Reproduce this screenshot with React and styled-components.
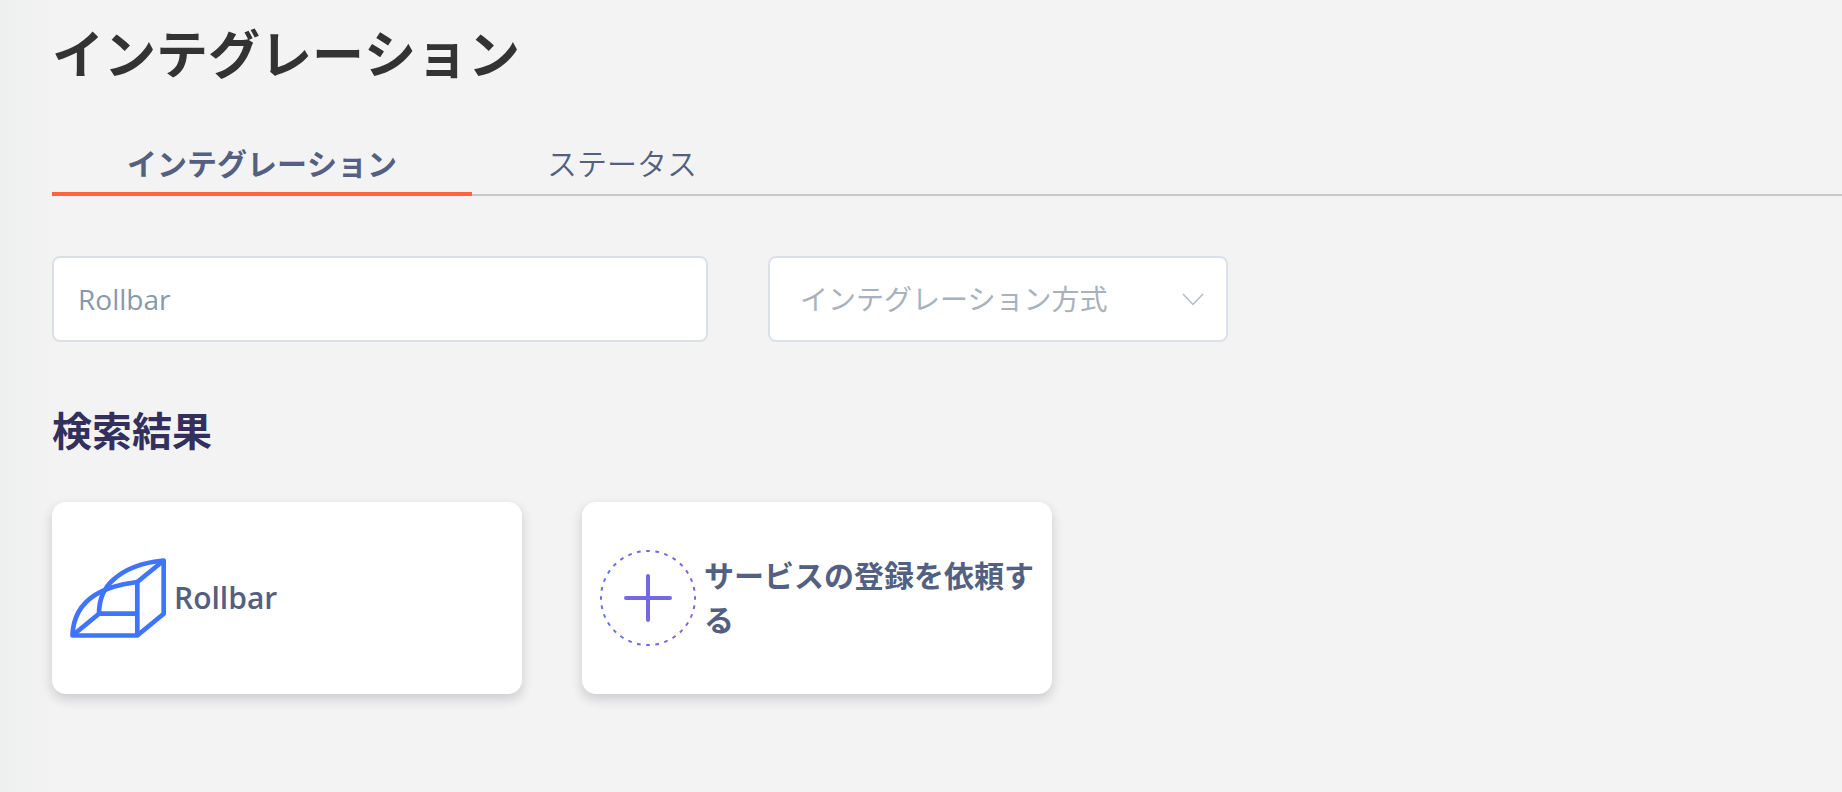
import React, { useState } from 'react';
import styled, { createGlobalStyle } from 'styled-components';

const GlobalStyle = createGlobalStyle`
  * {
    box-sizing: border-box;
  }

  body {
    margin: 0;
    background: #f3f3f3;
    font-family: 'Open Sans', 'Noto Sans CJK JP', sans-serif;
    font-kerning: none;
  }
`;

const Page = styled.main`
  min-height: 100vh;
  padding: 16px 0 60px 52px;
  background: linear-gradient(to right, #eeefef, #f3f3f3 56px);
`;

const Title = styled.h1`
  margin: 0;
  color: #333;
  font-size: 52px;
  font-weight: 700;
  line-height: 76px;
`;

const Tabs = styled.nav`
  display: flex;
  margin-top: 48px;
  box-shadow: inset 0 -2px #c9c9c9;
`;

const Tab = styled.button`
  height: 56px;
  padding: 0 75px 4px;
  border: 0;
  border-bottom: 4px solid ${props => (props.$active ? '#ff643d' : 'transparent')};
  background: none;
  color: #536081;
  font-family: inherit;
  font-kerning: inherit;
  font-size: 30px;
  font-weight: ${props => (props.$active ? 700 : 350)};
  line-height: 44px;
  white-space: nowrap;
  cursor: pointer;
`;

const Filters = styled.form`
  display: flex;
  flex-wrap: wrap;
  gap: 60px;
  margin-top: 60px;
  padding-right: 52px;
`;

const SearchInput = styled.input`
  width: 656px;
  max-width: 100%;
  height: 86px;
  padding: 0 24px;
  border: 2px solid #dce0e6;
  border-radius: 8px;
  outline: none;
  background: #fff;
  color: #8798ad;
  font-family: inherit;
  font-size: 28px;
  font-weight: 500;
`;

const SelectBox = styled.div`
  position: relative;
  width: 460px;
  max-width: 100%;
`;

const Select = styled.select`
  width: 100%;
  height: 86px;
  padding: 0 72px 0 30px;
  border: 2px solid #dce0e9;
  border-radius: 8px;
  outline: none;
  appearance: none;
  background: #fff;
  color: #a8b1bc;
  font-family: inherit;
  font-size: 28px;
  font-weight: 400;
`;

const Chevron = styled.svg`
  position: absolute;
  top: 36px;
  right: 24px;
  width: 22px;
  height: 14px;
  pointer-events: none;
`;

const SectionTitle = styled.h2`
  margin: 60px 0 42px;
  color: #33305e;
  font-size: 40px;
  font-weight: 700;
  line-height: 58px;
`;

const Cards = styled.div`
  display: flex;
  flex-wrap: wrap;
  gap: 60px;
  padding-right: 52px;
`;

const Card = styled.a`
  display: flex;
  align-items: center;
  gap: 8px;
  width: 470px;
  max-width: 100%;
  min-height: 192px;
  padding: 18px;
  border-radius: 14px;
  background: #fff;
  box-shadow: 0 5px 12px rgba(40, 41, 61, 0.2);
  color: #536081;
  font-size: 30px;
  font-weight: 600;
  line-height: 44px;
  text-decoration: none;
`;

const CardIcon = styled.svg`
  flex: none;
  width: 96px;
  height: 96px;
  fill: none;
`;

const RollbarLogo = () => (
  <CardIcon
    viewBox='0 0 96 96'
    stroke='#3e74ff'
    strokeWidth='4.7'
    strokeLinejoin='round'
    aria-hidden='true'
  >
    <path d='M2.5 85.5H67.3V32C51 34 37 37.5 25 45C11 54 3 67 2.5 85.5Z' />
    <path d='M2.5 85.5L29 63.7H67.3' />
    <path d='M29 63.7C29 50 33 39 43 30C55 19 73 12.5 93.7 10.5V63.7L67.3 85.5' />
    <path d='M67.3 32L93.7 10.5' />
  </CardIcon>
);

const PlusIcon = () => (
  <CardIcon viewBox='0 0 96 96' stroke='url(#plus)' aria-hidden='true'>
    <defs>
      <linearGradient id='plus' gradientUnits='userSpaceOnUse' x1='0' y1='48' x2='96' y2='48'>
        <stop offset='0' stopColor='#5f74e6' />
        <stop offset='1' stopColor='#865fe2' />
      </linearGradient>
    </defs>
    <circle
      cx='48'
      cy='48'
      r='47'
      strokeWidth='2'
      pathLength='320'
      strokeDasharray='4 6'
      strokeDashoffset='2'
    />
    <path d='M26 48H70M48 26V70' stroke='#7469e4' strokeWidth='4' strokeLinecap='round' />
  </CardIcon>
);

const tabs = ['インテグレーション', 'ステータス'];

const services = [
  { name: 'Rollbar', Icon: RollbarLogo },
  { name: 'サービスの登録を依頼する', Icon: PlusIcon }
];

const App = () => {
  const [activeTab, setActiveTab] = useState(tabs[0]);
  const [term, setTerm] = useState('Rollbar');

  return (
    <Page>
      <GlobalStyle />
      <Title>インテグレーション</Title>
      <Tabs>
        {tabs.map(tab => (
          <Tab
            key={tab}
            type='button'
            $active={tab === activeTab}
            onClick={() => setActiveTab(tab)}
          >
            {tab}
          </Tab>
        ))}
      </Tabs>
      <Filters onSubmit={e => e.preventDefault()}>
        <SearchInput
          type='text'
          aria-label='Rollbar'
          value={term}
          onChange={e => setTerm(e.target.value)}
        />
        <SelectBox>
          <Select aria-label='インテグレーション方式' defaultValue=''>
            <option value=''>インテグレーション方式</option>
          </Select>
          <Chevron viewBox='0 0 22 14' fill='none' stroke='#b4bcc8' strokeWidth='1.5'>
            <path d='M1 2L11 12.5L21 2' />
          </Chevron>
        </SelectBox>
      </Filters>
      <SectionTitle>検索結果</SectionTitle>
      <Cards>
        {services.map(({ name, Icon }) => (
          <Card key={name} href='#'>
            <Icon />
            <span>{name}</span>
          </Card>
        ))}
      </Cards>
    </Page>
  );
};

export default App;
